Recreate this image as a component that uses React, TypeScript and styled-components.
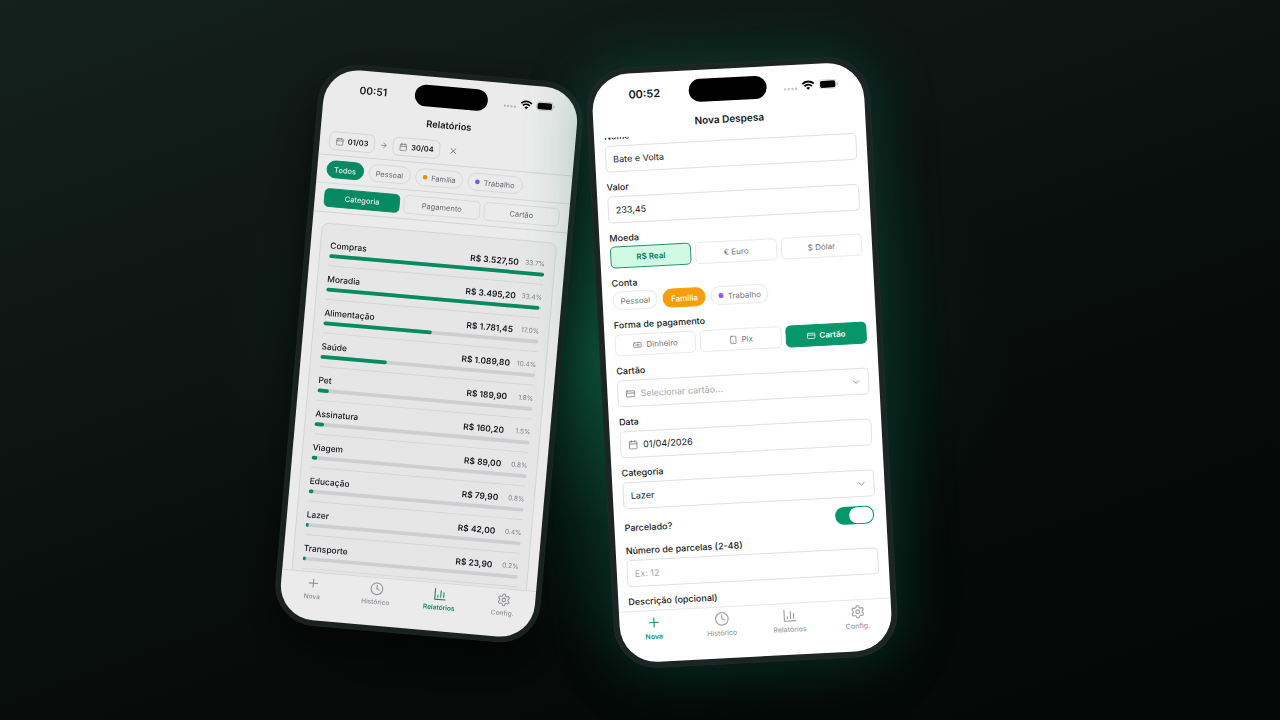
import React from "react";
import styled, { createGlobalStyle, css } from "styled-components";
import { ArrowRight, Banknote, Calendar, ChevronDown, Clock, CreditCard, Plus, Settings, Smartphone, X } from "lucide-react";

const GlobalStyle = createGlobalStyle`
  * { box-sizing: border-box; }
  body { margin: 0; background: #060a09; font-family: Inter, "Liberation Sans", sans-serif; }
  button, input, select { font: inherit; color: inherit; margin: 0; }
  h1, h2, p, ul { margin: 0; padding: 0; }
`;

const Stage = styled.main`
  min-height: 100vh;
  display: flex;
  align-items: center;
  justify-content: center;
  gap: 29px;
  padding: 4px 110px 0 0;
  overflow: hidden;
  background:
    radial-gradient(ellipse 400px 300px at 48% 50%, rgba(16, 160, 110, 0.36), rgba(10, 140, 95, 0.1) 55%, rgba(8, 140, 95, 0) 100%),
    linear-gradient(160deg, #14211d 0%, #0c1311 40%, #060a09 70%, #050807 100%);
`;

const Phone = styled.section<{ $back?: boolean }>`
  position: relative;
  flex: none;
  width: 284px;
  padding: 5px;
  border: 1px solid #1e2b28;
  border-radius: 43px;
  background: #1c2523;
  ${(p) =>
    p.$back
      ? css`
          transform: translateY(-9px) rotate(5deg) scale(0.937);
          filter: brightness(0.92);
          box-shadow: 0 24px 50px rgba(0, 0, 0, 0.6);
        `
      : css`
          z-index: 1;
          transform: rotate(-3deg);
          box-shadow: 0 0 64px rgba(16, 150, 105, 0.32), 0 20px 60px rgba(0, 0, 0, 0.15);
        `}
`;

const Screen = styled.div`
  display: flex;
  flex-direction: column;
  height: 589px;
  border-radius: 37px;
  overflow: hidden;
  background: #ffffff;
  color: #16181d;
`;

const StatusBar = styled.header`
  flex: none;
  display: grid;
  grid-template-columns: 1fr 78px 1fr;
  align-items: center;
  height: 41px;
`;

const Time = styled.span`
  padding-left: 8px;
  text-align: center;
  font-size: 11px;
  font-weight: 600;
`;

const Island = styled.span`
  height: 23px;
  border-radius: 12px;
  background: #000;
`;

const Signals = styled.span`
  display: flex;
  align-items: center;
  gap: 4px;
  padding-left: 17px;
`;

const Title = styled.h1`
  flex: none;
  height: 22px;
  line-height: 18px;
  text-align: center;
  font-size: 10px;
  font-weight: 600;
`;

const Tabs = styled.nav`
  flex: none;
  display: grid;
  grid-template-columns: repeat(4, 1fr);
  height: 52px;
  padding-top: 4px;
  border-top: 1px solid #e7e8ea;
`;

const Tab = styled.a<{ $on?: boolean }>`
  display: flex;
  flex-direction: column;
  align-items: center;
  gap: 2px;
  height: 26px;
  color: ${(p) => (p.$on ? "#059669" : "#9a9da5")};
  font-size: 7px;
  line-height: 9px;
  font-weight: ${(p) => (p.$on ? 600 : 500)};
  text-decoration: none;
`;

const Scroll = styled.div<{ $end?: boolean }>`
  flex: 1;
  min-height: 0;
  display: flex;
  flex-direction: column;
  justify-content: ${(p) => (p.$end ? "flex-end" : "flex-start")};
  overflow: hidden;
`;

const Form = styled.form`
  display: flex;
  flex-direction: column;
  padding: 0 10px;
`;

const Group = styled.div`
  flex: none;
  display: flex;
  flex-direction: column;
  margin: 0 0 9px;
`;

const Label = styled.label<{ $tight?: boolean }>`
  height: ${(p) => (p.$tight ? 14 : 15)}px;
  line-height: 12px;
  font-size: 9px;
  font-weight: 500;
  white-space: nowrap;
`;

const Box = styled.div`
  display: flex;
  align-items: center;
  gap: 5px;
  height: 27px;
  padding: 0 7px;
  border: 1px solid #e0e1e4;
  border-radius: 5px;
  color: #7b7f88;
`;

const fieldText = css`
  flex: 1;
  min-width: 0;
  padding: 0;
  border: 0;
  outline: 0;
  background: transparent;
  font-size: 9px;
  color: #16181d;
`;

const TextField = styled.input`
  ${fieldText}
  &::placeholder { color: #a3a6ad; opacity: 1; }
`;

const Select = styled.select<{ $empty?: boolean }>`
  ${fieldText}
  appearance: none;
  color: ${(p) => (p.$empty ? "#a3a6ad" : "#16181d")};
`;

const Segments = styled.div`
  display: grid;
  grid-template-columns: repeat(3, 1fr);
  gap: 4px;
`;

const Segment = styled.button<{ $tone?: "solid" | "soft"; $low?: boolean }>`
  display: flex;
  align-items: center;
  justify-content: center;
  gap: 4px;
  height: ${(p) => (p.$low ? 20 : 22)}px;
  padding: 0;
  border: 1px solid #e9eaec;
  border-radius: 5px;
  background: #fff;
  color: #6f737c;
  font-size: 8px;
  font-weight: 400;
  ${(p) => p.$tone === "solid" && css`background: #059669; border-color: #059669; color: #fff; font-weight: ${p.$low ? 500 : 600};`}
  ${(p) => p.$tone === "soft" && css`background: #d1fae5; border-color: #2f8f6c; color: #047857; font-weight: 600;`}
`;

const Chips = styled.div`
  display: flex;
  gap: 5px;
`;

const Chip = styled.button<{ $fill?: string }>`
  display: flex;
  align-items: center;
  gap: 4px;
  height: 19px;
  padding: 0 7px;
  border: 1px solid ${(p) => p.$fill || "#e9eaec"};
  border-radius: 10px;
  background: ${(p) => p.$fill || "#fff"};
  color: ${(p) => (p.$fill ? "#fff" : "#6f737c")};
  font-size: 8px;
  font-weight: ${(p) => (p.$fill ? 500 : 400)};
`;

const Dot = styled.i<{ $color: string }>`
  width: 5px;
  height: 5px;
  border-radius: 50%;
  background: ${(p) => p.$color};
`;

const SwitchRow = styled.div`
  flex: none;
  display: flex;
  align-items: center;
  justify-content: space-between;
  height: 18px;
  margin-bottom: 9px;
  padding-right: 2px;
  > ${Label} { line-height: 15px; }
`;

const Toggle = styled.input`
  appearance: none;
  display: flex;
  justify-content: flex-end;
  width: 39px;
  height: 18px;
  padding: 1px;
  border-radius: 9px;
  background: #059669;
  &::after { content: ""; width: 24px; height: 16px; border-radius: 8px; background: #fff; }
`;

const Strip = styled.div`
  flex: none;
  display: flex;
  align-items: center;
  gap: 5px;
  padding: 5px 10px;
  border-bottom: 1px solid #e5e6e9;
  &:first-child { padding-top: 4px; }
  > ${Segments} { flex: 1; }
`;

const DateButton = styled.button`
  display: flex;
  align-items: center;
  gap: 4px;
  height: 20px;
  padding: 0 6px;
  border: 1px solid #e5e6e9;
  border-radius: 6px;
  background: #fff;
  font-size: 8px;
  font-weight: 600;
  svg { color: #7b7f88; }
`;

const IconButton = styled.button`
  display: flex;
  padding: 0 0 0 4px;
  border: 0;
  background: none;
  color: #6f737c;
`;

const Card = styled.ul`
  flex: none;
  margin: 11px 10px 0;
  padding: 9px 10px;
  border: 1px solid #e5e6e9;
  border-radius: 8px;
  background: #fafafa;
  list-style: none;
`;

const Row = styled.li`
  display: flex;
  flex-direction: column;
  gap: 3px;
  height: 36px;
  padding: 8px 0;
  border-bottom: 1px solid #e7e8ea;
`;

const RowText = styled.div`
  display: flex;
  height: 12px;
  line-height: 12px;
  font-size: 9px;
  font-weight: 500;
`;

const Amount = styled.strong`
  margin-left: auto;
  font-weight: 600;
`;

const Percent = styled.span`
  width: 28px;
  text-align: right;
  font-size: 7px;
  font-weight: 400;
  color: #8b8f97;
`;

const Track = styled.div`
  height: 4px;
  border-radius: 2px;
  background: #dfe0e3;
`;

const Fill = styled.div`
  min-width: 3px;
  height: 4px;
  border-radius: 2px;
  background: #059669;
`;

function Status({ time }: { time: string }) {
  return (
    <StatusBar>
      <Time>{time}</Time>
      <Island />
      <Signals>
        <svg width="14" height="12" viewBox="0 0 14 12" fill="#bfc1c4">
          <circle cx="1.5" cy="9" r="1.2" /><circle cx="5.1" cy="9" r="1.2" />
          <circle cx="8.7" cy="9" r="1.2" /><circle cx="12.3" cy="9" r="1.2" />
        </svg>
        <svg width="13" height="10" viewBox="0 0 12 9" fill="none" stroke="#000" strokeWidth="1.7">
          <path d="M.7 3.3a7.6 7.6 0 0 1 10.6 0M2.6 5.4a4.8 4.8 0 0 1 6.8 0" />
          <path d="M6 8.8 4.2 7a2.6 2.6 0 0 1 3.6 0Z" fill="#000" stroke="none" />
        </svg>
        <svg width="20" height="10" viewBox="0 0 20 10">
          <rect x=".4" y=".4" width="17.4" height="9.200" rx="3" fill="none" stroke="#cfd0d2" strokeWidth=".8" />
          <rect x="1.400" y="1.500" width="15.400" height="7" rx="2" fill="#000" />
          <path d="M18.500 3.500v3c.7-.2 1.100-.8 1.100-1.500s-.4-1.300-1.100-1.500Z" fill="#b4b6b9" />
        </svg>
      </Signals>
    </StatusBar>
  );
}

function ReportIcon() {
  return (
    <svg width="15" height="15" viewBox="0 0 24 24" fill="none" stroke="currentColor" strokeWidth="1.8" strokeLinecap="round" strokeLinejoin="round">
      <path d="M3 3v18h18M8 17v-3M13 17V6M18 17V9" />
    </svg>
  );
}

function TabBar({ active }: { active: string }) {
  const items: [string, React.ReactNode][] = [
    ["Nova", <Plus size={15} strokeWidth={1.8} />],
    ["Histórico", <Clock size={15} strokeWidth={1.8} />],
    ["Relatórios", <ReportIcon />],
    ["Config.", <Settings size={15} strokeWidth={1.8} />],
  ];
  return (
    <Tabs>
      {items.map(([name, icon]) => (
        <Tab key={name} href={`#${name}`} $on={name === active}>
          {icon}
          {name}
        </Tab>
      ))}
    </Tabs>
  );
}

const categories: [string, string, string, number][] = [
  ["Compras", "3.527,50", "33.7%", 100],
  ["Moradia", "3.495,20", "33.4%", 99],
  ["Alimentação", "1.781,45", "17.0%", 50.5],
  ["Saúde", "1.089,80", "10.4%", 31],
  ["Pet", "189,90", "1.8%", 5.4],
  ["Assinatura", "160,20", "1.5%", 4.5],
  ["Viagem", "89,00", "0.8%", 2.5],
  ["Educação", "79,90", "0.8%", 2.3],
  ["Lazer", "42,00", "0.4%", 1.2],
  ["Transporte", "23,90", "0.2%", 0.7],
];

function Reports() {
  return (
    <Phone $back>
      <Screen>
        <Status time="00:51" />
        <Title>Relatórios</Title>
        <Scroll>
          <Strip>
            <DateButton><Calendar size={9} />01/03</DateButton>
            <ArrowRight size={9} color="#7b7f88" />
            <DateButton><Calendar size={9} />30/04</DateButton>
            <IconButton aria-label="Limpar"><X size={10} /></IconButton>
          </Strip>
          <Strip>
            <Chips>
              <Chip $fill="#059669">Todos</Chip>
              <Chip>Pessoal</Chip>
              <Chip><Dot $color="#f59e0b" />Família</Chip>
              <Chip><Dot $color="#8b5cf6" />Trabalho</Chip>
            </Chips>
          </Strip>
          <Strip>
            <Segments>
              <Segment $low $tone="solid">Categoria</Segment>
              <Segment $low>Pagamento</Segment>
              <Segment $low>Cartão</Segment>
            </Segments>
          </Strip>
          <Card>
            {categories.map(([name, value, share, width]) => (
              <Row key={name}>
                <RowText>
                  {name}
                  <Amount>R$ {value}</Amount>
                  <Percent>{share}</Percent>
                </RowText>
                <Track><Fill style={{ width: `${width}%` }} /></Track>
              </Row>
            ))}
          </Card>
        </Scroll>
        <TabBar active="Relatórios" />
      </Screen>
    </Phone>
  );
}

function NewExpense() {
  return (
    <Phone>
      <Screen>
        <Status time="00:52" />
        <Title as="h2">Nova Despesa</Title>
        <Scroll $end>
          <Form>
            <Group>
              <Label htmlFor="nome">Nome</Label>
              <Box><TextField id="nome" defaultValue="Bate e Volta" /></Box>
            </Group>
            <Group>
              <Label htmlFor="valor">Valor</Label>
              <Box><TextField id="valor" defaultValue="233,45" /></Box>
            </Group>
            <Group role="group" aria-label="Moeda">
              <Label as="span" $tight>Moeda</Label>
              <Segments>
                <Segment type="button" $tone="soft">R$ Real</Segment>
                <Segment type="button">€ Euro</Segment>
                <Segment type="button">$ Dólar</Segment>
              </Segments>
            </Group>
            <Group role="group" aria-label="Conta">
              <Label as="span" $tight>Conta</Label>
              <Chips>
                <Chip type="button">Pessoal</Chip>
                <Chip type="button" $fill="#f59e0b">Família</Chip>
                <Chip type="button"><Dot $color="#8b5cf6" />Trabalho</Chip>
              </Chips>
            </Group>
            <Group role="group" aria-label="Forma de pagamento">
              <Label as="span">Forma de pagamento</Label>
              <Segments>
                <Segment type="button"><Banknote size={9} />Dinheiro</Segment>
                <Segment type="button"><Smartphone size={9} />Pix</Segment>
                <Segment type="button" $tone="solid"><CreditCard size={9} />Cartão</Segment>
              </Segments>
            </Group>
            <Group>
              <Label htmlFor="cartao">Cartão</Label>
              <Box>
                <CreditCard size={10} />
                <Select id="cartao" $empty><option>Selecionar cartão...</option></Select>
                <ChevronDown size={10} />
              </Box>
            </Group>
            <Group>
              <Label htmlFor="data">Data</Label>
              <Box>
                <Calendar size={10} />
                <TextField id="data" defaultValue="01/04/2026" />
              </Box>
            </Group>
            <Group>
              <Label htmlFor="categoria">Categoria</Label>
              <Box>
                <Select id="categoria"><option>Lazer</option></Select>
                <ChevronDown size={10} />
              </Box>
            </Group>
            <SwitchRow>
              <Label htmlFor="parcelado">Parcelado?</Label>
              <Toggle id="parcelado" type="checkbox" role="switch" defaultChecked />
            </SwitchRow>
            <Group>
              <Label htmlFor="parcelas">Número de parcelas (2-48)</Label>
              <Box><TextField id="parcelas" placeholder="Ex: 12" /></Box>
            </Group>
            <Label as="span">Descrição (opcional)</Label>
          </Form>
        </Scroll>
        <TabBar active="Nova" />
      </Screen>
    </Phone>
  );
}

export default function App() {
  return (
    <>
      <GlobalStyle />
      <Stage>
        <Reports />
        <NewExpense />
      </Stage>
    </>
  );
}
